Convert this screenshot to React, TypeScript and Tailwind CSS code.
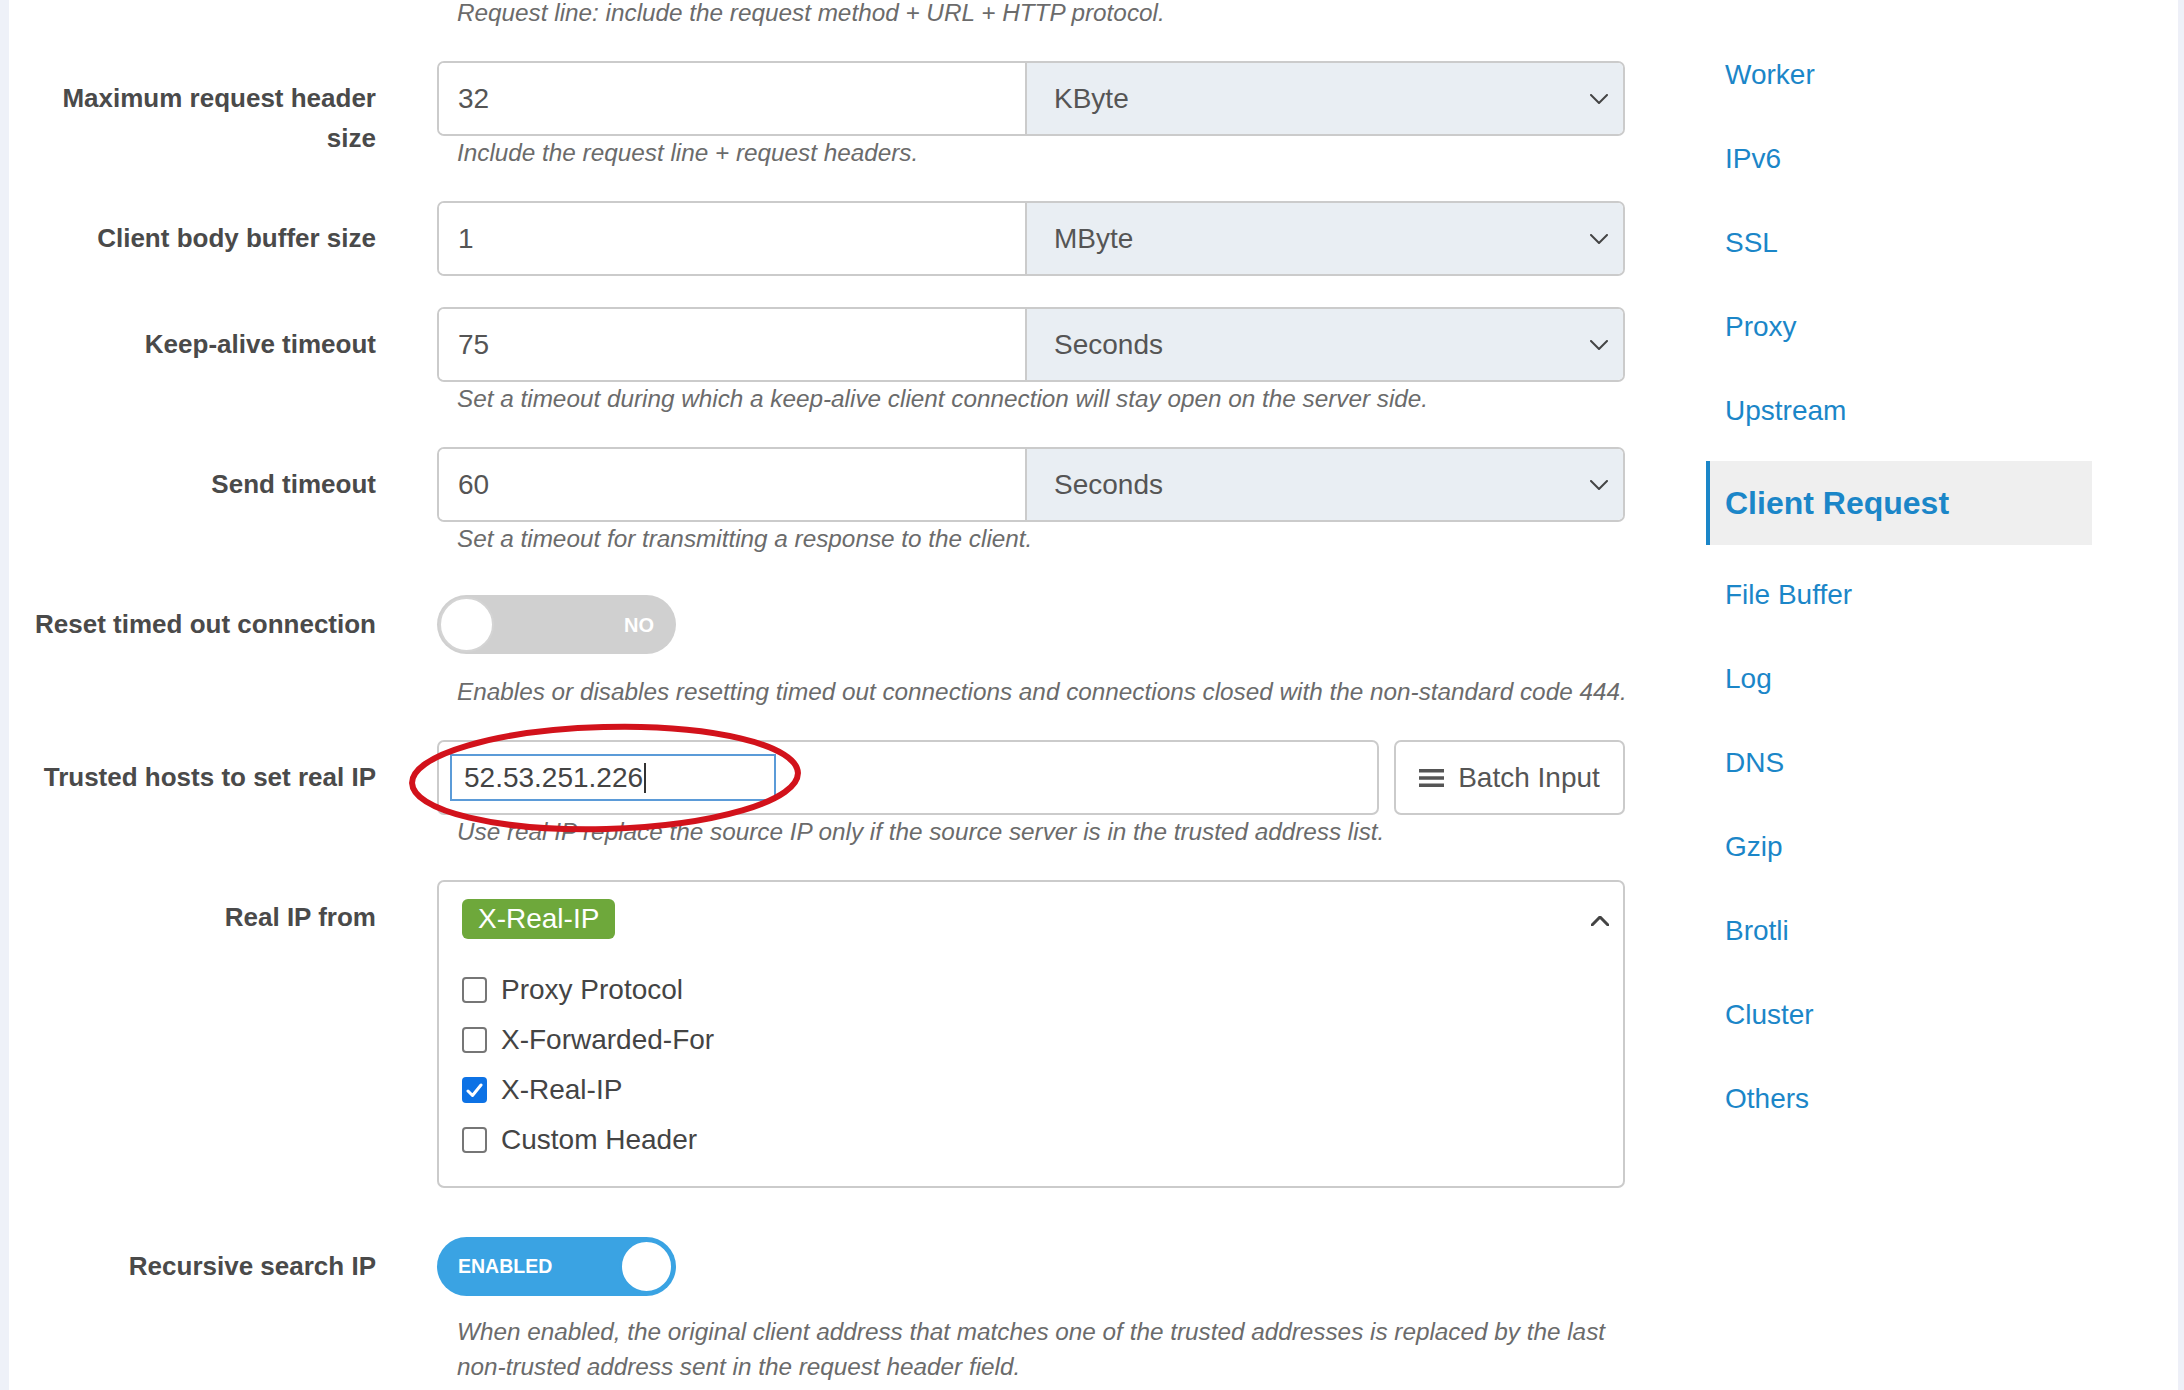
import React from "react";

const LABEL = "text-right text-[26px] font-bold leading-[40px] text-[#4a4a4a] pt-[17px]";
const HELP = "pl-[20px] text-[24.3px] italic leading-[34px] text-[#6b6b6b] whitespace-nowrap";

function Chevron({ up = false }: { up?: boolean }) {
  return (
    <svg width="18" height="10" viewBox="0 0 18 10" className={up ? "rotate-180" : ""}>
      <path d="M1 1 L9 9 L17 1" fill="none" stroke="#444" strokeWidth={up ? 3 : 2} strokeLinecap="round" strokeLinejoin="round" />
    </svg>
  );
}

function Row({
  label,
  children,
  help,
  helpMt = "",
  mb = "mb-[31px]",
}: {
  label: React.ReactNode;
  children: React.ReactNode;
  help?: React.ReactNode;
  helpMt?: string;
  mb?: string;
}) {
  return (
    <div className={`grid grid-cols-[367px_1188px] gap-x-[61px] ${mb}`}>
      <div className={LABEL}>{label}</div>
      <div>
        {children}
        {help && <div className={`${HELP} ${helpMt}`}>{help}</div>}
      </div>
    </div>
  );
}

function UnitInput({ value, unit }: { value: string; unit: string }) {
  return (
    <div className="flex h-[75px] rounded-[7px] border-2 border-[#cbcbcb] overflow-hidden">
      <div className="w-[586px] flex items-center pl-[19px] bg-white text-[28px] text-[#555]">{value}</div>
      <div className="flex-1 flex items-center justify-between bg-[#e9eef3] border-l-2 border-[#cbcbcb] pl-[27px] pr-[15px] text-[28px] text-[#555]">
        <span>{unit}</span>
        <Chevron />
      </div>
    </div>
  );
}

function Toggle({ on }: { on: boolean }) {
  return (
    <div className="h-[75px] flex items-center">
      {on ? (
        <div className="relative w-[239px] h-[59px] rounded-full bg-[#3aa3e3]">
          <span className="absolute left-[21px] top-0 h-full flex items-center text-[19.5px] font-bold text-white">ENABLED</span>
          <div className="absolute right-[2px] top-[2px] w-[55px] h-[55px] rounded-full bg-white border-[3px] border-[#3aa3e3]" />
        </div>
      ) : (
        <div className="relative w-[239px] h-[59px] rounded-full bg-[#d0d0d0]">
          <span className="absolute right-[22px] top-0 h-full flex items-center text-[20px] font-bold text-white">NO</span>
          <div className="absolute left-[2px] top-[2px] w-[55px] h-[55px] rounded-full bg-white border-2 border-[#d4d4d4]" />
        </div>
      )}
    </div>
  );
}

function Check({ checked, label }: { checked?: boolean; label: string }) {
  return (
    <div className="h-[50px] flex items-center">
      {checked ? (
        <div className="w-[25px] h-[26px] rounded-[4px] bg-[#0d72e5] flex items-center justify-center">
          <svg width="17" height="15" viewBox="0 0 17 15">
            <path d="M2 8 L6.5 12.5 L15 2" fill="none" stroke="white" strokeWidth="3" strokeLinecap="round" strokeLinejoin="round" />
          </svg>
        </div>
      ) : (
        <div className="w-[25px] h-[26px] rounded-[4px] border-2 border-[#767676] bg-white" />
      )}
      <span className="ml-[14px] text-[28px] text-[#444]">{label}</span>
    </div>
  );
}

const NAV = [
  "Worker",
  "IPv6",
  "SSL",
  "Proxy",
  "Upstream",
  "Client Request",
  "File Buffer",
  "Log",
  "DNS",
  "Gzip",
  "Brotli",
  "Cluster",
  "Others",
];

export default function App() {
  return (
    <div className="flex w-[2184px] h-[1390px] overflow-hidden bg-white font-['Liberation_Sans',Arial,sans-serif]">
      <div className="w-[9px] shrink-0 bg-[#eef1f8]" />

      {/* form */}
      <div className="w-[1616px] shrink-0 mt-[-4px]">
        <div className="grid grid-cols-[367px_1188px] gap-x-[61px] mb-[31px]">
          <div />
          <div className={HELP}>Request line: include the request method + URL + HTTP protocol.</div>
        </div>

        <Row label={<>Maximum request header<br />size</>} help="Include the request line + request headers.">
          <UnitInput value="32" unit="KByte" />
        </Row>

        <Row label="Client body buffer size">
          <UnitInput value="1" unit="MByte" />
        </Row>

        <Row label="Keep-alive timeout" help="Set a timeout during which a keep-alive client connection will stay open on the server side.">
          <UnitInput value="75" unit="Seconds" />
        </Row>

        <Row label="Send timeout" help="Set a timeout for transmitting a response to the client.">
          <UnitInput value="60" unit="Seconds" />
        </Row>

        <Row
          label="Reset timed out connection"
          helpMt="mt-[13px]"
          help="Enables or disables resetting timed out connections and connections closed with the non-standard code 444."
        >
          <Toggle on={false} />
        </Row>

        <Row label="Trusted hosts to set real IP" help="Use real IP replace the source IP only if the source server is in the trusted address list.">
          <div className="flex gap-[15px]">
            <div className="relative w-[942px] h-[75px] rounded-[7px] border-2 border-[#cbcbcb] bg-white">
              <div className="absolute left-[11px] top-[12px] w-[326px] h-[47px] border-2 border-[#5b9bd8] flex items-center pl-[12px]">
                <span className="text-[28px] text-[#444]">52.53.251.226</span>
                <span className="ml-[1px] w-[2px] h-[30px] bg-[#333]" />
              </div>
              <svg
                className="absolute left-[-34px] top-[-23px] overflow-visible"
                width="400"
                height="118"
                viewBox="0 0 400 118"
              >
                <ellipse cx="200" cy="59" rx="193" ry="51" fill="none" stroke="#d2121b" strokeWidth="6" transform="rotate(-1.5 200 59)" />
              </svg>
            </div>
            <div className="w-[231px] h-[75px] rounded-[7px] border-2 border-[#cbcbcb] bg-white flex items-center justify-center gap-[14px]">
              <svg width="25" height="20" viewBox="0 0 25 20">
                <rect x="0" y="1" width="25" height="3.5" fill="#555" />
                <rect x="0" y="8.25" width="25" height="3.5" fill="#555" />
                <rect x="0" y="15.5" width="25" height="3.5" fill="#555" />
              </svg>
              <span className="text-[28px] text-[#555]">Batch Input</span>
            </div>
          </div>
        </Row>

        <Row label="Real IP from" mb="mb-[41px]">
          <div className="relative h-[308px] rounded-[7px] border-2 border-[#cbcbcb] bg-white pl-[23px] pt-[17px]">
            <div className="inline-flex items-center h-[40px] px-[16px] rounded-[6px] bg-[#6ea83b] text-[28px] text-white">X-Real-IP</div>
            <div className="absolute right-[14px] top-[34px]">
              <Chevron up />
            </div>
            <div className="mt-[26px]">
              <Check label="Proxy Protocol" />
              <Check label="X-Forwarded-For" />
              <Check checked label="X-Real-IP" />
              <Check label="Custom Header" />
            </div>
          </div>
        </Row>

        <Row
          label="Recursive search IP"
          helpMt="mt-[10px] leading-[35px]"
          help={
            <>
              When enabled, the original client address that matches one of the trusted addresses is replaced by the last
              <br />
              non-trusted address sent in the request header field.
            </>
          }
        >
          <Toggle on={true} />
        </Row>
      </div>

      {/* nav */}
      <div className="w-[81px] shrink-0" />
      <nav className="w-[386px] shrink-0 pt-[33px]">
        {NAV.map((n) =>
          n === "Client Request" ? (
            <div
              key={n}
              className="h-[84px] my-[8px] flex items-center bg-[#efefef] border-l-[4px] border-[#1b86c8] pl-[15px] text-[32px] font-bold text-[#1b86c8]"
            >
              {n}
            </div>
          ) : (
            <div key={n} className="h-[84px] flex items-center pl-[19px] text-[28px] text-[#1b86c8]">
              {n}
            </div>
          )
        )}
      </nav>
      <div className="flex-1" />
      <div className="w-[6px] shrink-0 bg-[#eef0f8]" />
    </div>
  );
}
